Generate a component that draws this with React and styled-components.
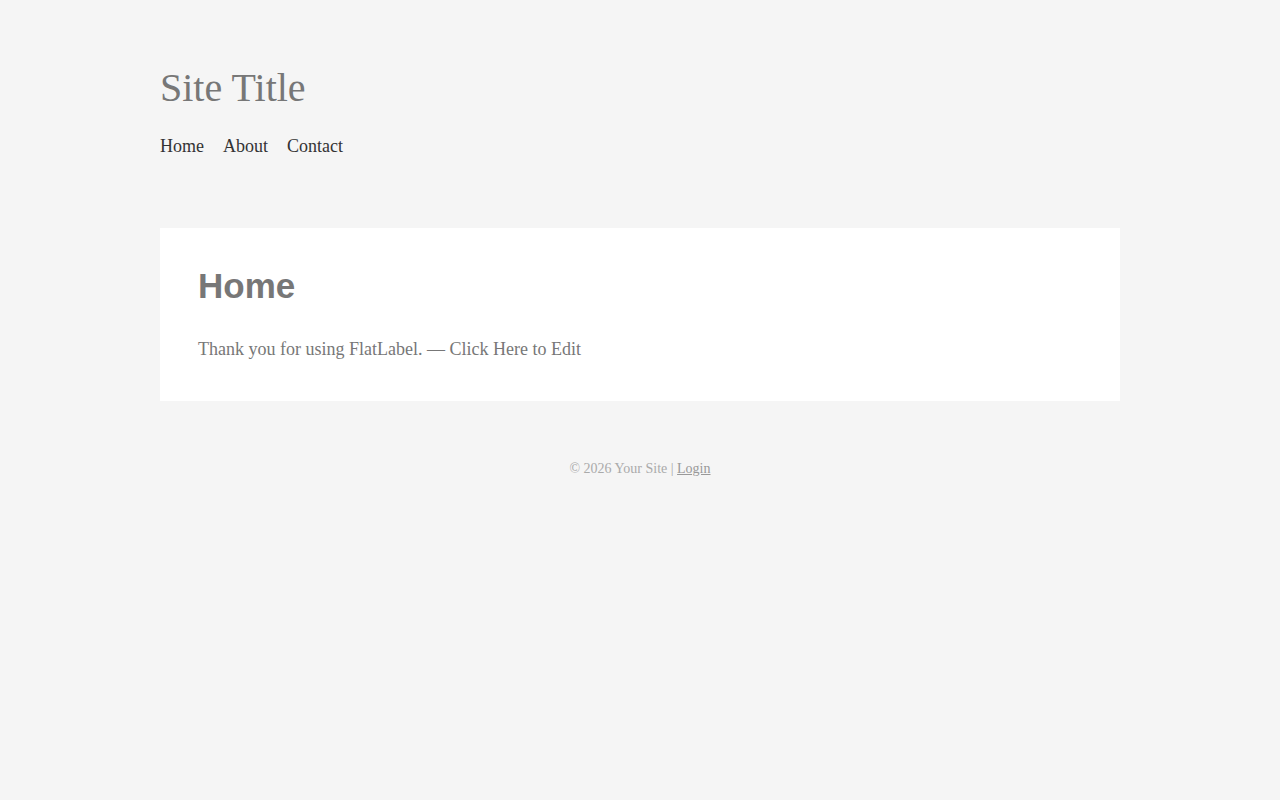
import React from "react";
import styled, { createGlobalStyle } from "styled-components";

const GlobalStyle = createGlobalStyle`
  html, body {
    margin: 0;
    padding: 0;
    background: #f5f5f5;
  }
  body {
    font-family: "Liberation Serif", "Times New Roman", serif;
    color: #777;
  }
`;

const Wrapper = styled.div`
  width: 960px;
  margin: 0 auto;
  padding-top: 65px;
`;

const Header = styled.header`
  display: flex;
  flex-direction: column;
  gap: 25px;
`;

const SiteTitle = styled.h1`
  margin: 0;
  font-size: 40px;
  font-weight: normal;
  line-height: 46px;
  color: #777;
`;

const Nav = styled.nav`
  display: flex;
  gap: 19px;
`;

const NavLink = styled.a`
  font-size: 18px;
  line-height: 21px;
  color: #333;
  text-decoration: none;
`;

const Card = styled.main`
  margin-top: 71px;
  background: #fff;
  padding: 38px 38px 41px;
`;

const PageTitle = styled.h2`
  margin: 0 0 33px;
  font-family: "Liberation Sans", Arial, sans-serif;
  font-size: 35px;
  font-weight: bold;
  line-height: 40px;
  color: #777;
`;

const Text = styled.p`
  margin: 0;
  font-size: 18px;
  line-height: 21px;
  color: #777;
`;

const Footer = styled.footer`
  margin-top: 60px;
  text-align: center;
  font-size: 14px;
  line-height: 16px;
  color: #aaa;
`;

const FooterLink = styled.a`
  color: #999;
  text-decoration: underline;
`;

export default function App() {
  return (
    <>
      <GlobalStyle />
      <Wrapper>
        <Header>
          <SiteTitle>Site Title</SiteTitle>
          <Nav>
            <NavLink href="#">Home</NavLink>
            <NavLink href="#">About</NavLink>
            <NavLink href="#">Contact</NavLink>
          </Nav>
        </Header>
        <Card>
          <PageTitle>Home</PageTitle>
          <Text>Thank you for using FlatLabel. — Click Here to Edit</Text>
        </Card>
        <Footer>
          © 2026 Your Site | <FooterLink href="#">Login</FooterLink>
        </Footer>
      </Wrapper>
    </>
  );
}
